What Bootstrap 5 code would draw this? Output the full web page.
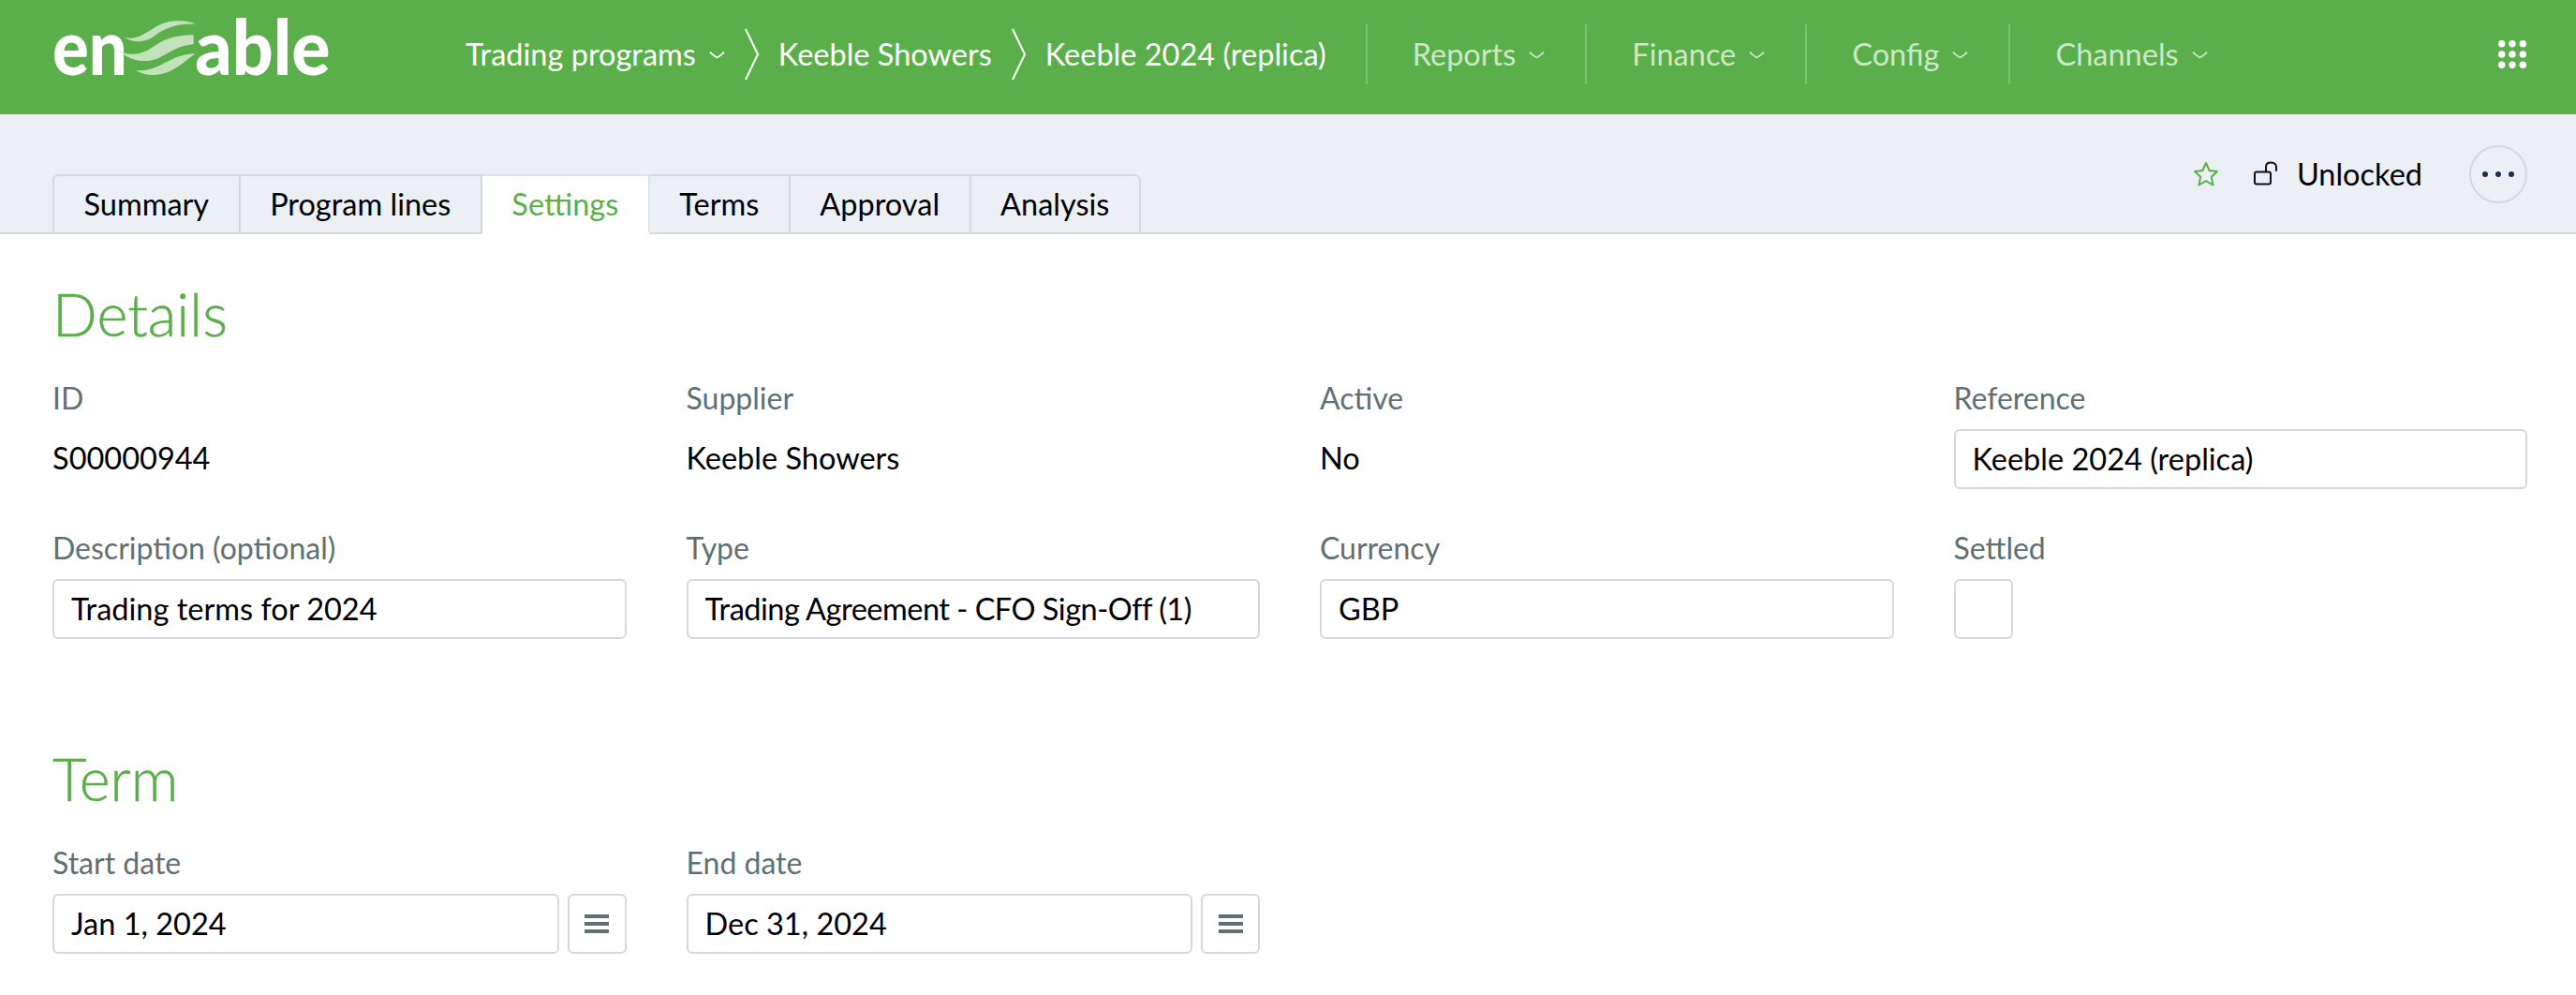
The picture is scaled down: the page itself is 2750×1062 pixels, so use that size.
<!DOCTYPE html>
<html lang="en">
<head>
<meta charset="utf-8">
<title>Keeble 2024 (replica)</title>
<link href="https://cdn.jsdelivr.net/npm/bootstrap@5.3.0/dist/css/bootstrap.min.css" rel="stylesheet">
<style>
:root{--en-green:#5baf4a;--en-line:#d5d9dd;--en-label:#5f7073;--en-grey:#eceff4;}
html,body{height:100%;}
body{font-family:"Lato","Liberation Sans",sans-serif;font-size:32.5px;color:#000;background:#fff;overflow:hidden;}
.top-bar{height:122px;background:var(--en-green);padding:0 0 6px 30px;flex-wrap:nowrap;}
.brand-logo{width:340px;height:100px;display:block;flex:none;margin:4px 127px 0 0;overflow:visible;}
.brand-logo text{font-family:"Lato","Liberation Sans",sans-serif;font-weight:900;fill:#fff;font-size:245px;}
.crumb{color:#fff;text-decoration:none;white-space:nowrap;}
.crumb:hover{color:#fff;}
.caret-sm{width:17px;height:9px;margin-left:14px;flex:none;}
.crumb-sep{width:15px;height:56px;margin:0 21px;flex:none;}
.menu-group{height:64px;border-left:2px solid #7dc06f;padding-left:48px;padding-right:43px;color:#cde8c7;text-decoration:none;white-space:nowrap;}
.menu-group:hover{color:#cde8c7;}
.first-menu{margin-left:42px;}
.grid-icon{width:30px;height:30px;margin-right:53px;flex:none;}
.sub-bar{height:128px;background:var(--en-grey);border-bottom:2px solid var(--en-line);padding:0 52px 0 56px;}
.sub-tabs{border-bottom:0;margin-bottom:-2px;flex-wrap:nowrap;}
.sub-tabs .nav-link{height:64px;padding:0 31.5px;color:#000;background:var(--en-grey);border:2px solid var(--en-line);border-left-width:0;border-radius:0;margin:0;line-height:60px;}
.sub-tabs .nav-item:first-child .nav-link{border-left-width:2px;border-top-left-radius:6px;}
.sub-tabs .nav-item:last-child .nav-link{border-top-right-radius:6px;}
.sub-tabs .nav-link.active{background:#fff;color:var(--en-green);border-bottom-color:#fff;}
.tools{margin-top:33px;}
.star-icon{width:28px;height:28px;margin-right:36px;}
.lock-icon{width:28px;height:28px;margin-right:19px;}
.more-btn{width:62px;height:62px;border-radius:50%;border:2px solid var(--en-line);background:transparent;margin-left:50px;padding:0;display:flex;align-items:center;justify-content:center;}
.more-btn svg{width:36px;height:8px;display:block;}
.form-zone{padding:0 52px 0 56px;}
.sect-title{font-family:inherit;font-size:63px;line-height:72px;color:var(--en-green);font-weight:300;-webkit-text-stroke:0.5px var(--en-green);margin:0;}
.first-title{padding-top:49px;margin-bottom:36px;}
.term-title{margin-top:68px;margin-bottom:36px;}
.field-grid{--bs-gutter-x:64px;--bs-gutter-y:0;}
.field-label{color:var(--en-label);font-size:32px;line-height:36px;margin:0 0 15px;display:block;}
.field-cell{height:160px;}
.plain-val{height:64px;line-height:62px;}
.ctl{height:64px;font-size:32.5px;line-height:58px;padding:0 18px 2px;border:2px solid var(--en-line);border-radius:6px;color:#000;background:#fff;}
.ctl:focus{border-color:var(--en-line);box-shadow:none;}
.ctl-tight{letter-spacing:-.5px;}
.check-box{width:63px;height:64px;border:2px solid var(--en-line);border-radius:6px;background:#fff;display:block;}
.date-row{gap:9px;}
.date-btn{width:63px;height:64px;flex:none;padding:0;border:2px solid var(--en-line);border-radius:6px;background:#fff;display:flex;align-items:center;justify-content:center;}
.date-btn svg{width:26px;height:20px;display:block;}
</style>
</head>
<body>
<nav class="navbar top-bar d-flex align-items-center">
  <svg class="brand-logo" viewBox="0 0 1020 300" role="img" aria-label="enable">
    <text x="78" y="210" textLength="240" lengthAdjust="spacingAndGlyphs">en</text>
    <text x="535" y="210" textLength="433" lengthAdjust="spacingAndGlyphs">able</text>
    <g fill="#c2e2bc">
      <path d="M310 90C375 105 400 35 480 37C505 37 525 42 537 47C470 45 430 65 405 85C380 105 340 110 310 90Z"/>
      <path d="M285 125C310 150 360 150 400 120C440 92 480 82 530 82L530 112C480 116 450 140 420 155C375 175 320 165 285 125Z"/>
      <path d="M345 195C390 200 420 180 450 165C480 150 510 142 535 142C510 160 490 180 460 195C420 215 375 215 345 195Z"/>
    </g>
  </svg>
  <a class="crumb d-flex align-items-center" href="#">Trading programs
    <svg class="caret-sm" viewBox="0 0 18 9"><path d="M1 1.5C5 5 7 7 9 7.5C11 7 13 5 17 1.5" fill="none" stroke="#fff" stroke-width="2"/></svg>
  </a>
  <svg class="crumb-sep" viewBox="0 0 15 56"><path d="M1 1L14 28L1 55" fill="none" stroke="#fff" stroke-width="2"/></svg>
  <a class="crumb" href="#">Keeble Showers</a>
  <svg class="crumb-sep" viewBox="0 0 15 56"><path d="M1 1L14 28L1 55" fill="none" stroke="#fff" stroke-width="2"/></svg>
  <a class="crumb" href="#">Keeble 2024 (replica)</a>
  <a class="menu-group first-menu d-flex align-items-center" href="#">Reports
    <svg class="caret-sm" viewBox="0 0 18 9"><path d="M1 1.5C5 5 7 7 9 7.5C11 7 13 5 17 1.5" fill="none" stroke="#cde8c7" stroke-width="2"/></svg>
  </a>
  <a class="menu-group d-flex align-items-center" href="#">Finance
    <svg class="caret-sm" viewBox="0 0 18 9"><path d="M1 1.5C5 5 7 7 9 7.5C11 7 13 5 17 1.5" fill="none" stroke="#cde8c7" stroke-width="2"/></svg>
  </a>
  <a class="menu-group d-flex align-items-center" href="#">Config
    <svg class="caret-sm" viewBox="0 0 18 9"><path d="M1 1.5C5 5 7 7 9 7.5C11 7 13 5 17 1.5" fill="none" stroke="#cde8c7" stroke-width="2"/></svg>
  </a>
  <a class="menu-group d-flex align-items-center" href="#">Channels
    <svg class="caret-sm" viewBox="0 0 18 9"><path d="M1 1.5C5 5 7 7 9 7.5C11 7 13 5 17 1.5" fill="none" stroke="#cde8c7" stroke-width="2"/></svg>
  </a>
  <svg class="grid-icon ms-auto" viewBox="0 0 30 30" fill="#fff">
    <circle cx="3.7" cy="3.7" r="3.7"/><circle cx="15" cy="3.7" r="3.7"/><circle cx="26.3" cy="3.7" r="3.7"/>
    <circle cx="3.7" cy="15" r="3.7"/><circle cx="15" cy="15" r="3.7"/><circle cx="26.3" cy="15" r="3.7"/>
    <circle cx="3.7" cy="26.3" r="3.7"/><circle cx="15" cy="26.3" r="3.7"/><circle cx="26.3" cy="26.3" r="3.7"/>
  </svg>
</nav>
<div class="sub-bar d-flex justify-content-between align-items-end">
  <ul class="nav nav-tabs sub-tabs">
    <li class="nav-item"><a class="nav-link" href="#">Summary</a></li>
    <li class="nav-item"><a class="nav-link" href="#">Program lines</a></li>
    <li class="nav-item"><a class="nav-link active" href="#">Settings</a></li>
    <li class="nav-item"><a class="nav-link" href="#">Terms</a></li>
    <li class="nav-item"><a class="nav-link" href="#">Approval</a></li>
    <li class="nav-item"><a class="nav-link" href="#">Analysis</a></li>
  </ul>
  <div class="tools d-flex align-items-center align-self-start">
    <svg class="star-icon" viewBox="0 0 28 28"><path d="M14 2L17.6 10L26 11L19.8 16.8L21.5 25.5L14 21.1L6.5 25.5L8.2 16.8L2 11L10.4 10Z" fill="none" stroke="#5baf4a" stroke-width="2" stroke-linejoin="round"/></svg>
    <svg class="lock-icon" viewBox="0 0 28 28"><rect x="2" y="11.5" width="17" height="13" rx="2" fill="none" stroke="#111" stroke-width="2"/><path d="M14 11V6C14 3 16 1.5 19 1.5C22 1.5 25 3 25 6V10" fill="none" stroke="#111" stroke-width="2" stroke-linecap="round"/></svg>
    <span>Unlocked</span>
    <button class="more-btn" type="button" aria-label="More"><svg viewBox="0 0 36 8" fill="#1f2d50"><circle cx="4" cy="4" r="3"/><circle cx="18" cy="4" r="3"/><circle cx="32" cy="4" r="3"/></svg></button>
  </div>
</div>
<main class="form-zone">
  <h2 class="sect-title first-title">Details</h2>
  <div class="row row-cols-4 field-grid">
    <div class="col field-cell"><span class="field-label">ID</span><div class="plain-val">S00000944</div></div>
    <div class="col field-cell"><span class="field-label">Supplier</span><div class="plain-val">Keeble Showers</div></div>
    <div class="col field-cell"><span class="field-label">Active</span><div class="plain-val">No</div></div>
    <div class="col field-cell"><label class="field-label" for="f-ref">Reference</label><input id="f-ref" class="form-control ctl" value="Keeble 2024 (replica)"></div>
    <div class="col field-cell"><label class="field-label" for="f-desc">Description (optional)</label><input id="f-desc" class="form-control ctl" value="Trading terms for 2024"></div>
    <div class="col field-cell"><label class="field-label" for="f-type">Type</label><input id="f-type" class="form-control ctl ctl-tight" value="Trading Agreement - CFO Sign-Off (1)"></div>
    <div class="col field-cell"><label class="field-label" for="f-cur">Currency</label><input id="f-cur" class="form-control ctl" value="GBP"></div>
    <div class="col field-cell"><span class="field-label">Settled</span><span class="check-box"></span></div>
  </div>
  <h2 class="sect-title term-title">Term</h2>
  <div class="row row-cols-4 field-grid">
    <div class="col"><label class="field-label" for="f-start">Start date</label>
      <div class="d-flex date-row"><input id="f-start" class="form-control ctl" value="Jan 1, 2024"><button class="date-btn" type="button" aria-label="Pick start date"><svg viewBox="0 0 26 20" fill="#5f7073"><rect width="26" height="4"/><rect y="8" width="26" height="4"/><rect y="16" width="26" height="4"/></svg></button></div></div>
    <div class="col"><label class="field-label" for="f-end">End date</label>
      <div class="d-flex date-row"><input id="f-end" class="form-control ctl" value="Dec 31, 2024"><button class="date-btn" type="button" aria-label="Pick end date"><svg viewBox="0 0 26 20" fill="#5f7073"><rect width="26" height="4"/><rect y="8" width="26" height="4"/><rect y="16" width="26" height="4"/></svg></button></div></div>
  </div>
</main>
<script src="https://cdn.jsdelivr.net/npm/bootstrap@5.3.0/dist/js/bootstrap.bundle.min.js"></script>
</body>
</html>
